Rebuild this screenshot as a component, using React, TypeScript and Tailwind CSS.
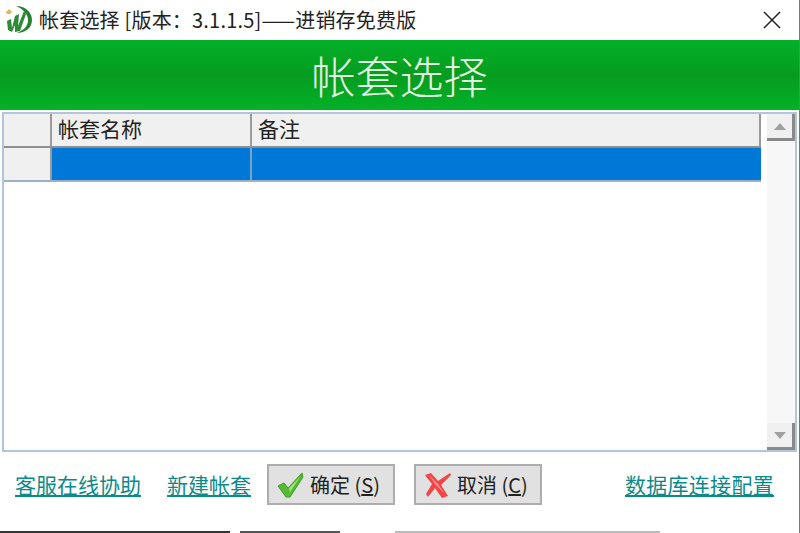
import React from 'react';

const font = "font-['Noto_Sans_CJK_SC','Liberation_Sans',sans-serif]";

function Logo() {
    return (
        <svg width="28" height="28" viewBox="0 0 28 28" className="shrink-0">
            <path d="M1 6 L4 3 L7 6 L5 8 L2 8 Z" fill="#e8b45a" />
            <path d="M11 0 C20 0 27 6 27 14 C27 22 20 27 12 27 C19 24 23 20 23 14 C23 8 18 3 11 0 Z" fill="#2a8032" />
            <path d="M2 15 L6 13 L7 22 L10 10 L14 8 L13 20 L19 5 L21 8 L15 25 L10 26 L10 19 L7 26 L3 24 Z" fill="#2f8a36" />
        </svg>
    );
}

function CheckIcon() {
    return (
        <svg width="28" height="26" viewBox="0 0 28 26">
            <path d="M1 14 L7 11 L11 16 L25 1 L26 5 L13 25 L9 25 Z" fill="#55bb33" stroke="#3d9a25" strokeWidth="1" />
            <path d="M12 16 L23 5 L13 20 Z" fill="#a4e27c" />
        </svg>
    );
}

function CrossIcon() {
    return (
        <svg width="28" height="26" viewBox="0 0 28 26">
            <path d="M1 3 L7 1 L14 9 L26 1 L27 3 L17 13 L24 24 L18 26 L11 16 L4 25 L2 22 L8 12 Z" fill="#f44444" />
            <path d="M5 3 L14 12 L21 22 L11 12 Z" fill="#fb8f8f" />
        </svg>
    );
}

function ScrollButton({ up }: { up: boolean }) {
    return (
        <div className="w-[28px] h-[27px] bg-[#f0f0f0] border-r-[3px] border-b-[3px] border-[#8a8a8a] flex items-center justify-center">
            <svg width="12" height="7" viewBox="0 0 12 7">
                <path d={up ? 'M6 0 L12 7 L0 7 Z' : 'M0 0 L12 0 L6 7 Z'} fill="#a0a0a0" />
            </svg>
        </div>
    );
}

function DialogButton({ icon, label, hotkey }: { icon: React.ReactNode; label: string; hotkey: string }) {
    return (
        <button className="w-[128px] h-[41px] bg-[#e1e1e1] border-2 border-[#adadad] flex items-center pl-[8px] gap-[5px] text-[20px] text-[#222]">
            {icon}
            <span>
                {label} (<span className="underline">{hotkey}</span>)
            </span>
        </button>
    );
}

export default function App() {
    return (
        <div className={`w-[800px] h-[533px] bg-white flex flex-col overflow-hidden border-r border-[#777] ${font}`}>
            <div className="h-[40px] flex items-center pl-[5px] pr-[18px] gap-[6px] shrink-0">
                <Logo />
                <span className="text-[20px] tracking-[0.2px] text-[#222] flex-1 whitespace-nowrap">帐套选择 [版本：3.1.1.5]——进销存免费版</span>
                <svg width="18" height="18" viewBox="0 0 18 18">
                    <path d="M1 1 L17 17 M17 1 L1 17" stroke="#222" strokeWidth="1.5" />
                </svg>
            </div>

            <div className="h-[70px] shrink-0 bg-[linear-gradient(#03b128,#069c20_50%,#03b128)] flex items-center justify-center text-[44px] text-[#e4f7e0] font-light">
                帐套选择
            </div>

            <div className="h-[340px] mt-[2px] ml-[2px] mr-[2px] border-2 border-[#b4c4da] flex shrink-0">
                <div className="w-[763px] flex flex-col">
                    <div className="w-[757px] flex h-[34px] bg-[#f0f0f0] border-b-2 border-[#8f8f8f] text-[21px] text-[#222]">
                        <div className="w-[48px] border-r-2 border-[#9a9a9a]" />
                        <div className="w-[200px] pl-[6px] border-r-2 border-[#9a9a9a] leading-[28px] whitespace-nowrap">帐套名称</div>
                        <div className="w-[509px] pl-[6px] border-r-2 border-[#9a9a9a] leading-[28px]">备注</div>
                    </div>
                    <div className="w-[757px] flex h-[34px] border-b-2 border-[#a0b0c4]">
                        <div className="w-[48px] bg-[#f0f0f0] border-r-2 border-[#9a9a9a]" />
                        <div className="w-[200px] bg-[#0078d7] border-r-2 border-[#7ba3c8]" />
                        <div className="w-[509px] bg-[#0078d7]" />
                    </div>
                </div>
                <div className="flex-1 flex flex-col justify-between bg-[#f7f7f7]">
                    <ScrollButton up />
                    <ScrollButton up={false} />
                </div>
            </div>

            <div className="flex items-center h-[41px] mt-[12px] pl-[15px] pr-[25px] text-[21px] text-[#0b8a8a] shrink-0">
                <a className="underline whitespace-nowrap">客服在线协助</a>
                <a className="underline ml-[26px] whitespace-nowrap">新建帐套</a>
                <div className="ml-[16px]">
                    <DialogButton icon={<CheckIcon />} label="确定" hotkey="S" />
                </div>
                <div className="ml-[19px]">
                    <DialogButton icon={<CrossIcon />} label="取消" hotkey="C" />
                </div>
                <a className="underline ml-auto whitespace-nowrap tracking-[0.3px]">数据库连接配置</a>
            </div>

            <div className="mt-auto h-[2px] flex shrink-0">
                <div className="w-[230px] bg-[#333]" />
                <div className="w-[100px] ml-[10px] bg-[#555]" />
                <div className="w-[265px] ml-[55px] bg-[#bbb]" />
            </div>
        </div>
    );
}
